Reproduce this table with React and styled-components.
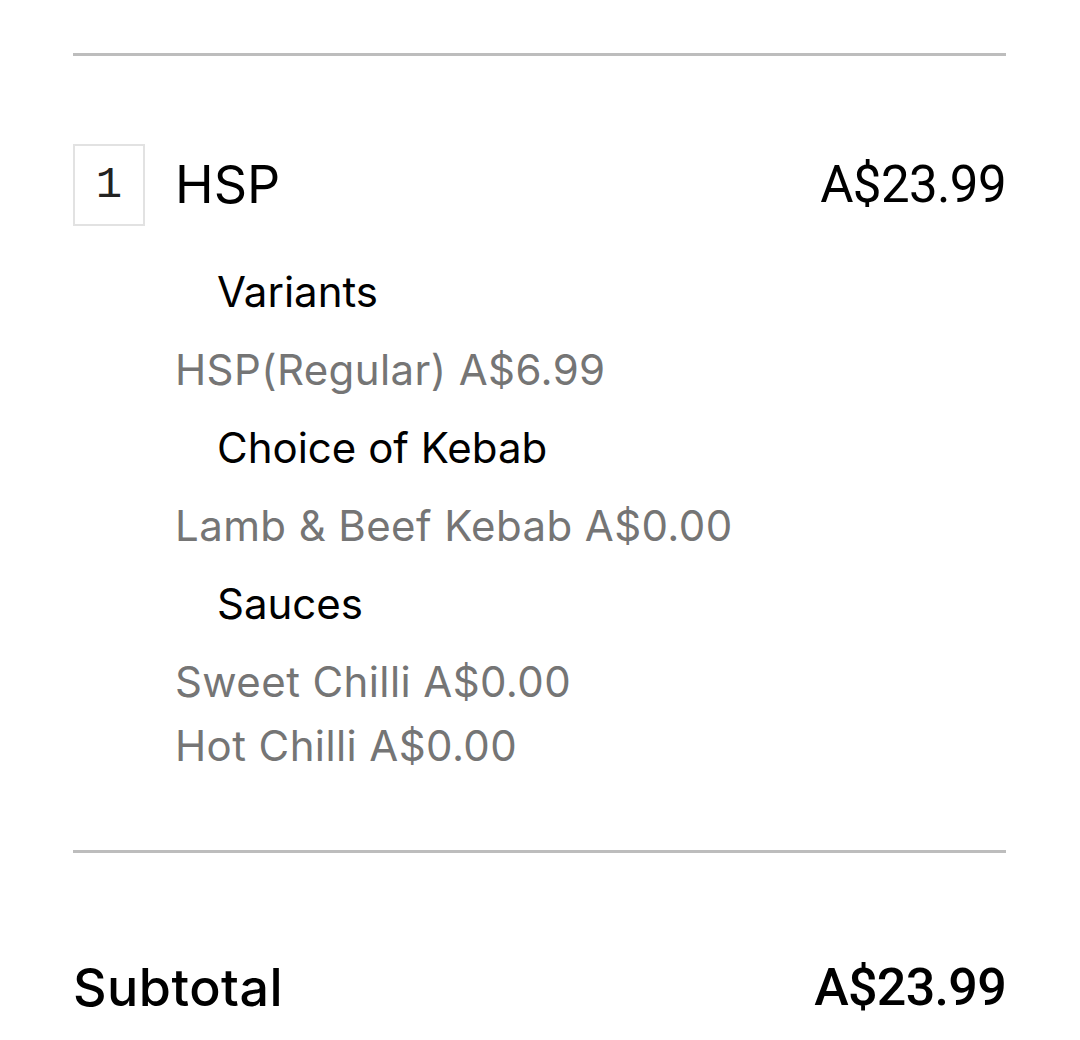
import React from 'react'
import styled, { createGlobalStyle } from 'styled-components'

const GlobalStyle = createGlobalStyle`
  body {
    margin: 0;
    background: #ffffff;
    font-family: Inter, "Noto Sans", sans-serif;
    color: #000000;
  }
`
const Page = styled.div`
  padding: 53px 74px 0 73px;
`
const Divider = styled.div`
  height: 3px;
  background-color: #bdbdbd;
`
const ItemRow = styled.div`
  display: flex;
  align-items: flex-start;
  margin-top: 88px;
  margin-bottom: 72px;
`
const QtyBox = styled.div`
  box-sizing: border-box;
  width: 72px;
  height: 82px;
  flex: none;
  border: 2px solid #e2e2e2;
  display: flex;
  align-items: center;
  justify-content: center;
  font-family: "Liberation Mono", monospace;
  font-size: 44px;
  color: #222222;
`
const ItemBody = styled.div`
  flex: 1;
  margin-left: 30px;
`
const ItemHead = styled.div`
  display: flex;
  justify-content: space-between;
  align-items: center;
  height: 82px;
  font-size: 52px;
  line-height: 82px;
`
const Price = styled.span`
  font-family: Roboto, Inter, sans-serif;
  font-size: ${(p) => (p.$big ? '52px' : '51px')};
  letter-spacing: ${(p) => (p.$big ? '-0.7px' : '-0.6px')};
`
const Details = styled.div`
  margin-top: 20px;
`
const GroupTitle = styled.div`
  font-size: 42px;
  line-height: 64px;
  padding: 14px 0 14px 42px;
  color: #000000;
`
const Option = styled.div`
  font-size: 42px;
  line-height: 64px;
  letter-spacing: 0.4px;
  color: #757575;
`
const TotalRow = styled.div`
  display: flex;
  justify-content: space-between;
  margin-top: 103px;
  font-size: 52px;
  line-height: 64px;
  font-weight: 500;
  letter-spacing: 0.5px;
`

const groups = [
  { title: 'Variants', options: ['HSP(Regular) A$6.99'] },
  { title: 'Choice of Kebab', options: ['Lamb & Beef Kebab A$0.00'] },
  { title: 'Sauces', options: ['Sweet Chilli A$0.00', 'Hot Chilli A$0.00'] },
]

const App = () => {
  return (
    <>
      <GlobalStyle />
      <Page>
        <Divider />
        <ItemRow>
          <QtyBox>1</QtyBox>
          <ItemBody>
            <ItemHead>
              <span>HSP</span>
              <Price>A$23.99</Price>
            </ItemHead>
            <Details>
              {groups.map((group) => (
                <div key={group.title}>
                  <GroupTitle>{group.title}</GroupTitle>
                  {group.options.map((option) => (
                    <Option key={option}>{option}</Option>
                  ))}
                </div>
              ))}
            </Details>
          </ItemBody>
        </ItemRow>
        <Divider />
        <TotalRow>
          <span>Subtotal</span>
          <Price $big>A$23.99</Price>
        </TotalRow>
      </Page>
    </>
  )
}

export default App
